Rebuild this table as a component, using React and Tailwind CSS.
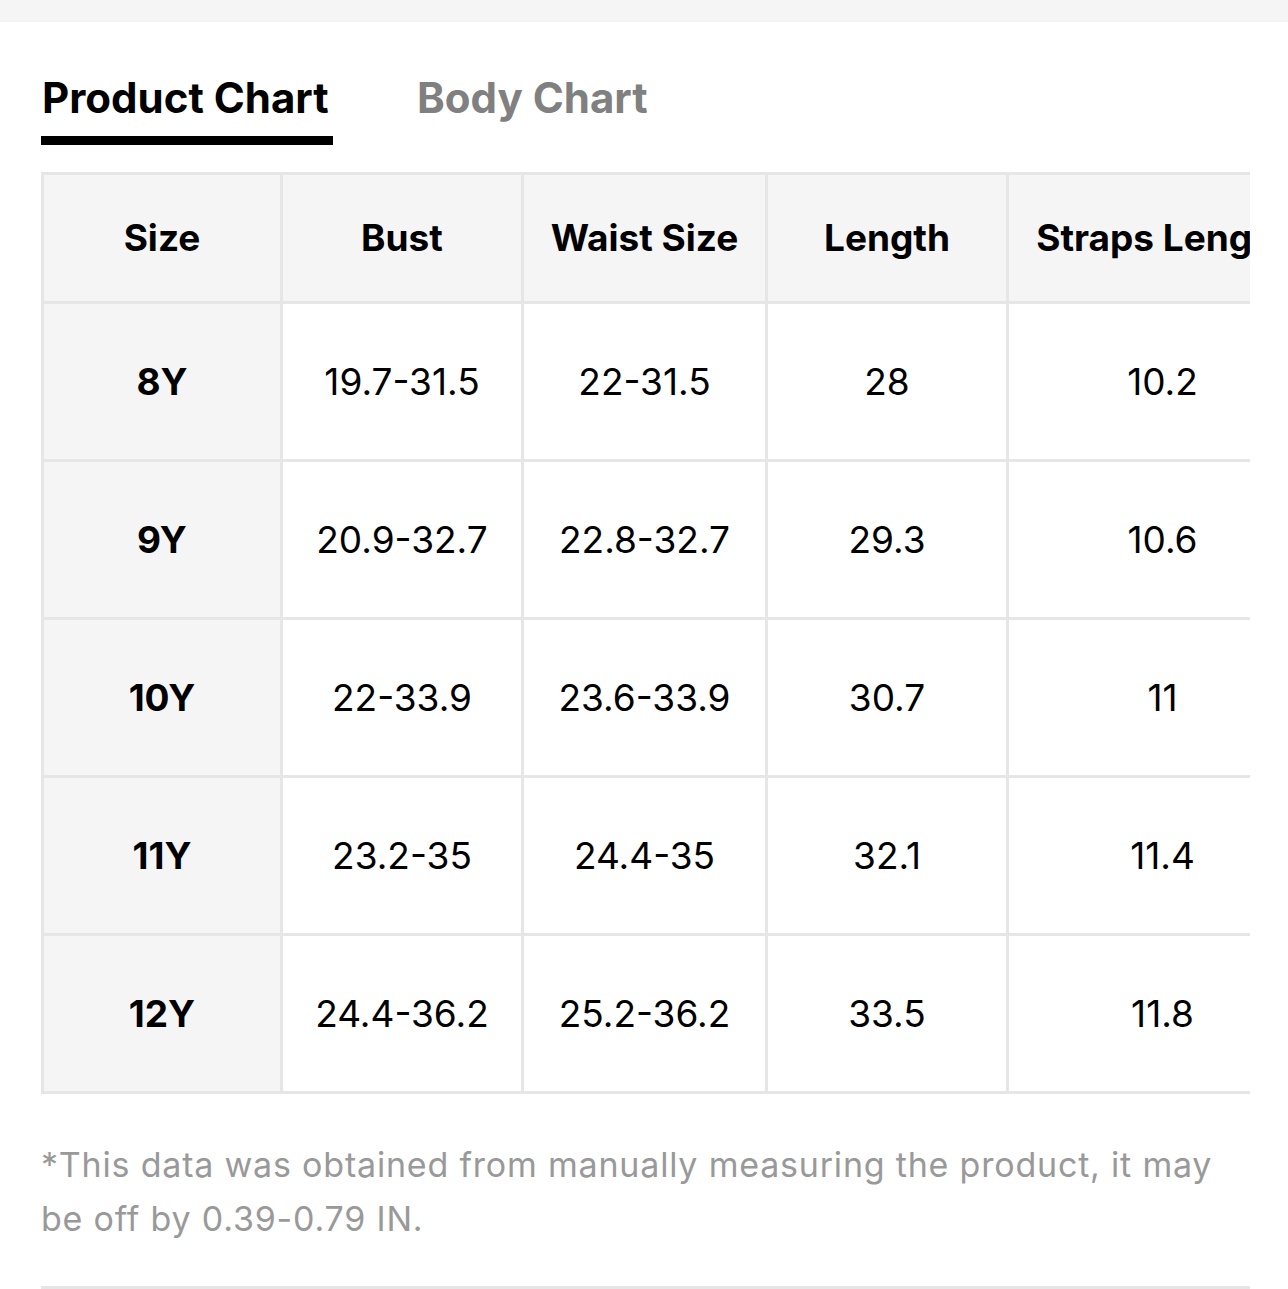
import React from 'react';

const columns = ['Size', 'Bust', 'Waist Size', 'Length', 'Straps Length'];
const widths = ['w-[239px]', 'w-[241px]', 'w-[244px]', 'w-[241px]', 'w-[310px]'];

const rows = [
    ['8Y', '19.7-31.5', '22-31.5', '28', '10.2'],
    ['9Y', '20.9-32.7', '22.8-32.7', '29.3', '10.6'],
    ['10Y', '22-33.9', '23.6-33.9', '30.7', '11'],
    ['11Y', '23.2-35', '24.4-35', '32.1', '11.4'],
    ['12Y', '24.4-36.2', '25.2-36.2', '33.5', '11.8'],
];

const App = () => {
    return (
        <div className="w-[1288px] min-h-[1289px] bg-white font-['Inter',sans-serif]">
            {/* top strip */}
            <div className="h-[22px] bg-[#f5f5f5]" />

            <div className="pl-[41px] pr-[38px]">
                {/* Tabs */}
                <div className="flex items-start gap-[84px] pt-[51px] font-bold text-[42px] leading-[50px]">
                    <div className="flex flex-col">
                        <span className="text-black px-[1px]">Product Chart</span>
                        <div className="mt-[13px] h-[9px] w-[292px] bg-black" />
                    </div>
                    <span className="text-[#808080]">Body Chart</span>
                </div>

                {/* Table */}
                <div className="mt-[27px] w-[1209px] overflow-hidden text-black">
                    <div className="w-max border-t-[3px] border-l-[3px] border-[#e6e6e6]">
                        <div className="flex h-[129px]">
                            {columns.map((col, idx) => (
                                <div
                                    key={idx}
                                    className={`${widths[idx]} shrink-0 flex items-center justify-center bg-[#f5f5f5] border-r-[3px] border-b-[3px] border-[#e6e6e6] text-[37px] font-bold whitespace-nowrap`}
                                >
                                    {col}
                                </div>
                            ))}
                        </div>
                        {rows.map((row, r) => (
                            <div key={r} className="flex h-[158px]">
                                {row.map((cell, c) => (
                                    <div
                                        key={c}
                                        className={`${widths[c]} shrink-0 flex items-center justify-center border-r-[3px] border-b-[3px] border-[#e6e6e6] text-[37px] ${c === 0 ? 'bg-[#f5f5f5] font-bold' : 'bg-white font-normal'}`}
                                    >
                                        {cell}
                                    </div>
                                ))}
                            </div>
                        ))}
                    </div>
                </div>

                {/* Note */}
                <p className="mt-[44px] w-[1195px] text-[34px] tracking-[0.8px] leading-[54px] text-[#999999]">
                    *This data was obtained from manually measuring the product, it may be off by 0.39-0.79 IN.
                </p>

                <div className="mt-[40px] h-[3px] w-[1209px] bg-[#e6e6e6]" />
            </div>
        </div>
    );
};

export default App;
